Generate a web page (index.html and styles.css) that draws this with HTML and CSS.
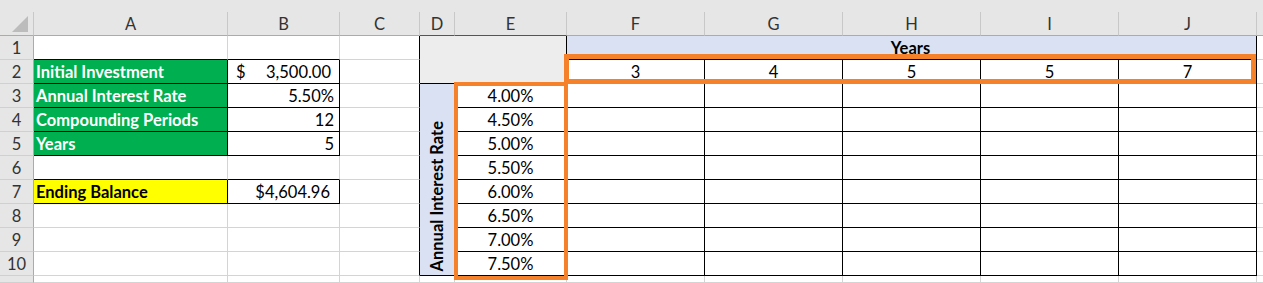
FILE: index.html
```html
<!DOCTYPE html>
<html lang="en">
<head>
    <meta charset="UTF-8">
    <meta name="viewport" content="width=device-width, initial-scale=1.0">
    <link rel="stylesheet" href="styles.css">
</head>
<body>

<div class="ribbon-edge"></div>

<main class="sheet">
    <!-- column headers -->
    <div class="corner"><span class="tri"></span></div>
    <div class="hd">A</div>
    <div class="hd">B</div>
    <div class="hd">C</div>
    <div class="hd dark">D</div>
    <div class="hd dark">E</div>
    <div class="hd">F</div>
    <div class="hd">G</div>
    <div class="hd">H</div>
    <div class="hd">I</div>
    <div class="hd">J</div>
    <div class="hd"></div>

    <!-- row 1 -->
    <div class="rh">1</div>
    <div class="kb"></div>
    <div class="kb"></div>
    <div class="kr"></div>
    <div class="k shade"></div>
    <div class="k blue years">Years</div>
    <div></div>

    <!-- row 2 -->
    <div class="rh">2</div>
    <div class="k label">Initial Investment</div>
    <div class="k acct"><span>$</span><span>3,500.00</span></div>
    <div class="kr"></div>
    <div class="k mid">3</div>
    <div class="k mid">4</div>
    <div class="k mid">5</div>
    <div class="k mid">5</div>
    <div class="k mid">7</div>
    <div></div>

    <!-- row 3 -->
    <div class="rh">3</div>
    <div class="k label">Annual Interest Rate</div>
    <div class="k num">5.50%</div>
    <div class="kr"></div>
    <div class="k blue side"><span class="vert">Annual Interest Rate</span></div>
    <div class="k mid">4.00%</div>
    <div class="k"></div><div class="k"></div><div class="k"></div><div class="k"></div><div class="k"></div>
    <div></div>

    <!-- row 4 -->
    <div class="rh">4</div>
    <div class="k label">Compounding Periods</div>
    <div class="k num">12</div>
    <div class="kr"></div>
    <div class="k mid">4.50%</div>
    <div class="k"></div><div class="k"></div><div class="k"></div><div class="k"></div><div class="k"></div>
    <div></div>

    <!-- row 5 -->
    <div class="rh">5</div>
    <div class="k label">Years</div>
    <div class="k num">5</div>
    <div class="kr"></div>
    <div class="k mid">5.00%</div>
    <div class="k"></div><div class="k"></div><div class="k"></div><div class="k"></div><div class="k"></div>
    <div></div>

    <!-- row 6 -->
    <div class="rh">6</div>
    <div class="kb"></div>
    <div class="kb"></div>
    <div class="kr"></div>
    <div class="k mid">5.50%</div>
    <div class="k"></div><div class="k"></div><div class="k"></div><div class="k"></div><div class="k"></div>
    <div></div>

    <!-- row 7 -->
    <div class="rh">7</div>
    <div class="k result">Ending Balance</div>
    <div class="k num balance">$4,604.96</div>
    <div class="kr"></div>
    <div class="k mid">6.00%</div>
    <div class="k"></div><div class="k"></div><div class="k"></div><div class="k"></div><div class="k"></div>
    <div></div>

    <!-- row 8 -->
    <div class="rh">8</div>
    <div></div>
    <div></div>
    <div class="kr"></div>
    <div class="k mid">6.50%</div>
    <div class="k"></div><div class="k"></div><div class="k"></div><div class="k"></div><div class="k"></div>
    <div></div>

    <!-- row 9 -->
    <div class="rh">9</div>
    <div></div>
    <div></div>
    <div class="kr"></div>
    <div class="k mid">7.00%</div>
    <div class="k"></div><div class="k"></div><div class="k"></div><div class="k"></div><div class="k"></div>
    <div></div>

    <!-- row 10 -->
    <div class="rh">10</div>
    <div></div>
    <div></div>
    <div class="kr"></div>
    <div class="k mid">7.50%</div>
    <div class="k"></div><div class="k"></div><div class="k"></div><div class="k"></div><div class="k"></div>
    <div></div>

    <!-- row 11, cut off at the bottom -->
    <div class="rh"></div>
    <div></div><div></div><div></div><div></div><div></div>
    <div></div><div></div><div></div><div></div><div></div><div></div>
</main>

<!-- highlight boxes drawn over the sheet -->
<div class="mark rates-mark"></div>
<div class="mark years-mark"></div>

</body>
</html>
```

FILE: styles.css
```css
body {
    margin: 0;
    font-family: Lato, "Liberation Sans", sans-serif;
    font-size: 16.5px;
    color: #000;
    background-color: #fff;
    overflow: hidden;
}

.ribbon-edge {
    height: 12px;
    background-color: #e6e6e6;
}

.sheet {
    display: grid;
    grid-template-columns: 34px 194px 112px 80px 35px 112px repeat(5, 138px) 1fr;
    grid-template-rows: 24px repeat(10, 24px) 1fr;
    height: 271px;
}

.sheet > div {
    box-sizing: border-box;
    border-right: 1px solid #d4d4d4;
    border-bottom: 1px solid #d4d4d4;
    display: flex;
    align-items: flex-end;
    padding: 0 4px 1px 2px;
    line-height: 20px;
    white-space: nowrap;
    overflow: hidden;
}

/* headers */
.sheet > .hd {
    background-color: #e6e6e6;
    color: #333;
    justify-content: center;
    align-items: center;
    padding: 0;
    border-right-color: #c8c8c8;
    border-bottom-color: #ababab;
}
.sheet > .hd.dark {
    border-bottom-color: #555;
}
.sheet > .corner {
    background-color: #e6e6e6;
    border-right-color: #c8c8c8;
    border-bottom-color: #ababab;
    position: relative;
    padding: 0;
}
.tri {
    position: absolute;
    right: 5px;
    bottom: 3px;
    width: 0;
    height: 0;
    border-left: 16px solid transparent;
    border-bottom: 16px solid #bcbcbc;
}
.sheet > .rh {
    background-color: #e6e6e6;
    color: #333;
    justify-content: center;
    padding: 0 0 1px;
    border-right-color: #ababab;
    border-bottom-color: #d0d0d0;
}

/* black cell borders */
.sheet > .k {
    border-right-color: #000;
    border-bottom-color: #000;
}
.sheet > .kr {
    border-right-color: #000;
}
.sheet > .kb {
    border-bottom-color: #000;
}

/* cell formats */
.label {
    background-color: #00b050;
    color: #fff;
    font-weight: bold;
}
.result {
    background-color: #ffff00;
    font-weight: bold;
}
.sheet > .num {
    justify-content: flex-end;
    padding-right: 5px;
}
.sheet > .balance {
    padding-right: 9px;
}
.sheet > .acct {
    justify-content: space-between;
    padding: 0 8px 1px 8px;
}
.sheet > .mid {
    justify-content: center;
    padding-left: 0;
    padding-right: 0;
}

.shade {
    grid-column: span 2;
    grid-row: span 2;
    background-color: #ededed;
}
.blue {
    background-color: #d9e1f2;
}
.sheet > .years {
    grid-column: span 5;
    justify-content: center;
    font-weight: bold;
}
.sheet > .side {
    grid-row: span 8;
    justify-content: center;
    padding: 0 0 4px;
}
.vert {
    writing-mode: vertical-rl;
    transform: rotate(180deg);
    font-weight: bold;
}

/* orange outlines */
.mark {
    position: absolute;
    box-sizing: border-box;
    border: 4px solid #f5822b;
}
.rates-mark {
    left: 454px;
    top: 82px;
    width: 114px;
    height: 198px;
}
.years-mark {
    left: 564px;
    top: 54px;
    width: 692px;
    height: 30px;
    border-width: 5px;
}
```
